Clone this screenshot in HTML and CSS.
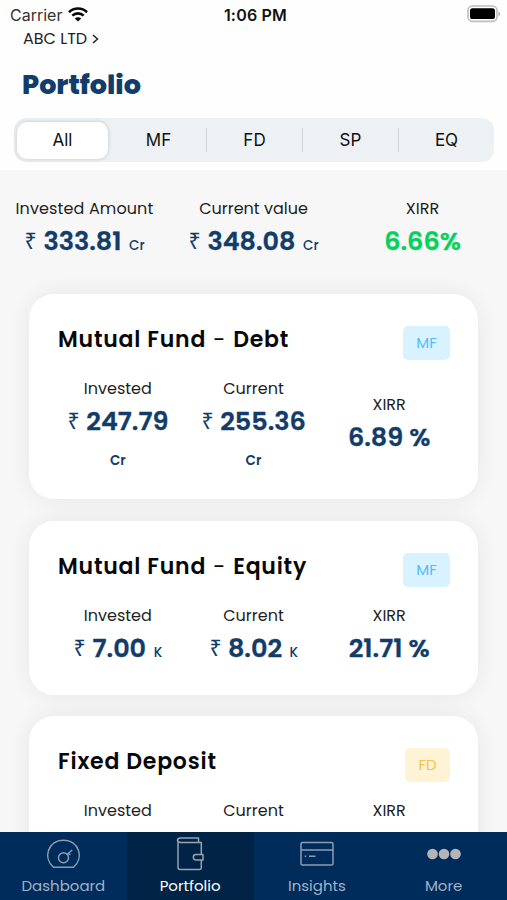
FILE: index.html
```html
<!DOCTYPE html>
<html lang="en">
<head>
<meta charset="utf-8">
<title>Portfolio</title>
<link rel="stylesheet" href="styles.css">
</head>
<body>
<div class="app">
  <header class="header">
    <div class="status">
      <div class="carrier">Carrier
        <svg width="20" height="15" viewBox="0 0 20 15" fill="none" stroke="#080808" stroke-width="2.6"><path d="M1 5.2C6 .3 14 .3 19 5.2M4.3 8.6c3.2-3 8.2-3 11.4 0"/><path d="M10 14.6l-3.2-3.2c1.8-1.6 4.6-1.6 6.4 0z" fill="#080808" stroke="none"/></svg>
      </div>
      <div class="clock">1:06 PM</div>
      <div class="battery"><svg width="34" height="18" viewBox="0 0 34 18"><rect x="1" y="1" width="29" height="15.4" rx="4.5" fill="#fff" stroke="#bdbdbd" stroke-width="1.6"/><rect x="3" y="3.3" width="25" height="10.8" rx="2.6" fill="#000"/><path d="M31.5 6.5c2 .8 2 4 0 4.8z" fill="#aaa"/></svg></div>
    </div>
    <div class="account">ABC LTD <svg width="7" height="10" viewBox="0 0 7 10" fill="none" stroke="#222" stroke-width="1.5"><path d="M1 1l4.5 4L1 9"/></svg></div>
    <h1 class="title">Portfolio</h1>
    <nav class="segments">
      <div class="segment selected">All</div>
      <div class="segment">MF</div>
      <div class="segment ruled">FD</div>
      <div class="segment ruled">SP</div>
      <div class="segment ruled">EQ</div>
    </nav>
  </header>
  <main class="content">
    <section class="summary">
      <div class="metric"><div class="label l-amount">Invested Amount</div><div class="value"><span class="rupee">₹</span> 333.81 <span class="unit">Cr</span></div></div>
      <div class="metric"><div class="label">Current value</div><div class="value"><span class="rupee">₹</span> 348.08 <span class="unit">Cr</span></div></div>
      <div class="metric"><div class="label">XIRR</div><div class="value gain">6.66%</div></div>
    </section>
    <section class="card">
      <div class="card-head"><h2>Mutual Fund <span class="dash">-</span> Debt</h2><span class="badge mf">MF</span></div>
      <div class="metrics">
        <div class="metric"><div class="label">Invested</div><div class="value"><span class="rupee">₹</span> 247.79</div><div class="unit below">Cr</div></div>
        <div class="metric"><div class="label">Current</div><div class="value"><span class="rupee">₹</span> 255.36</div><div class="unit below">Cr</div></div>
        <div class="metric"><div class="label">XIRR</div><div class="value">6.89 %</div></div>
      </div>
    </section>
    <section class="card">
      <div class="card-head"><h2>Mutual Fund <span class="dash">-</span> Equity</h2><span class="badge mf">MF</span></div>
      <div class="metrics">
        <div class="metric"><div class="label">Invested</div><div class="value"><span class="rupee">₹</span> 7.00 <span class="unit">K</span></div></div>
        <div class="metric"><div class="label">Current</div><div class="value"><span class="rupee">₹</span> 8.02 <span class="unit">K</span></div></div>
        <div class="metric"><div class="label">XIRR</div><div class="value">21.71 %</div></div>
      </div>
    </section>
    <section class="card">
      <div class="card-head"><h2>Fixed Deposit</h2><span class="badge fd">FD</span></div>
      <div class="metrics">
        <div class="metric"><div class="label">Invested</div></div>
        <div class="metric"><div class="label">Current</div></div>
        <div class="metric"><div class="label">XIRR</div></div>
      </div>
    </section>
  </main>
  <footer class="tabs">
    <div class="tab"><svg width="36" height="36" viewBox="0 0 36 36" fill="none" stroke="#8b9cb1" stroke-width="1.5"><path d="M8.500 31.300C-2.500 22 3 4.200 18.500 4.200S39.500 22 28.500 31.300Z" stroke-linejoin="round"/><circle cx="18.500" cy="21.800" r="5"/><path d="M22.200 18.300l5-4.300M23.500 18l2 .500"/></svg><span>Dashboard</span></div>
    <div class="tab active"><svg width="36" height="36" viewBox="0 0 36 36" fill="none" stroke="#98a3b0" stroke-width="1.500" stroke-linejoin="round"><path d="M29.300 18.500V6.500H8.500c-2 0-3-1-3-2.200s1-2.300 3-2.300h18v4M6 4.500V31.500a2 2 0 0 0 2 2h19.300a2 2 0 0 0 2-2v-7.500"/><path d="M31 18.500h-7a2.700 2.700 0 0 0 0 5.400h7z"/></svg><span>Portfolio</span></div>
    <div class="tab"><svg width="36" height="36" viewBox="0 0 36 36" fill="none" stroke="#8b9cb1" stroke-width="1.500"><rect x="2" y="6.500" width="32" height="22.500" rx="1.500"/><path d="M2 14h32M5.700 20.300h1.500M10 20.300h6.500"/></svg><span>Insights</span></div>
    <div class="tab"><svg width="36" height="36" viewBox="0 0 36 36" fill="#b4b4b7"><circle cx="6.500" cy="18" r="5.300"/><circle cx="18" cy="18" r="5.300"/><circle cx="29.500" cy="18" r="5.300"/></svg><span>More</span></div>
  </footer>
</div>
</body>
</html>
```
FILE: styles.css
```css
* { box-sizing: border-box; }
body { margin: 0; background: #fff; color: #111; font-family: Poppins, Inter, "Noto Sans", sans-serif; }
.app { width: 507px; height: 900px; overflow: hidden; display: flex; flex-direction: column; }
.header { height: 170px; flex: none; background: #fefefe; }
.status { height: 29px; padding: 0 6px 0 10px; display: grid; grid-template-columns: 1fr auto 1fr; align-items: center; font-family: Inter, sans-serif; font-size: 16px; }
.carrier { display: flex; align-items: center; gap: 6px; color: #333; }
.clock { font-weight: 600; letter-spacing: 0.2px; padding-right: 4px; margin-right: -4px; }
.battery { display: flex; justify-content: flex-end; margin-top: -2px; }
.account { height: 20px; line-height: 20px; padding-left: 23px; font-size: 16px; color: #222; }
.account svg { margin-left: 1px; }
.title { margin: 17px 0 0; padding-left: 22px; height: 38px; line-height: 38px; font-size: 27px; font-weight: 800; color: #123c69; }
.segments { margin: 14px 13px 0 14px; height: 44px; display: grid; grid-template-columns: repeat(5, 1fr); align-items: center; background: #edf1f4; border-radius: 12px; }
.segment { height: 24px; line-height: 24px; text-align: center; font-family: Inter, sans-serif; font-size: 17px; border-left: 1px solid transparent; }
.segment.ruled { border-left-color: #d0d5d9; }
.segment.selected { height: 37px; line-height: 37px; margin: 0 2px 0 3px; background: #fff; border: 0; border-radius: 10px; box-shadow: 0 0 4px rgba(0,0,0,.18); }
.content { flex: 1; min-height: 0; overflow: hidden; background: #f7f7f8; }
.summary { height: 124px; padding-top: 27px; display: grid; grid-template-columns: repeat(3, 1fr); }
.metric { text-align: center; white-space: nowrap; }
.label { height: 24px; line-height: 24px; font-size: 16px; color: #1e1e1e; }
.l-amount { letter-spacing: 0.12px; }
.value { height: 40px; line-height: 40px; font-size: 25.5px; font-weight: 600; color: #123c69; -webkit-text-stroke: 0.35px currentColor; }
.rupee { display: inline-block; width: 12px; font-family: "Noto Sans", sans-serif; font-weight: 400; font-size: 23px; line-height: 1; -webkit-text-stroke: 0; margin-right: 1px; transform: translateY(-1px) scaleX(.93); }
.unit { font-size: 13.5px; font-weight: 500; color: #123c69; -webkit-text-stroke: 0; }
.value .unit { margin-left: 1.5px; }
.unit.below { height: 32px; line-height: 39px; font-weight: 600; }
.gain { color: #08d05c; }
.card { width: 449px; margin: 0 0 21.5px 29px; padding: 28px 21px 0; height: 174px; border-radius: 25px; background: #fff; box-shadow: 0 0 24px rgba(0,0,0,.07); }
.summary + .card { height: 205px; }
.card-head { height: 42px; display: flex; justify-content: space-between; align-items: center; padding: 0 7px 0 8px; }
h2 { margin: 0; height: 40px; line-height: 34px; font-size: 22px; font-weight: 600; color: #080808; letter-spacing: 0.8px; }
.dash { display: inline-block; font-weight: 400; margin: 0 1px; }
.badge { height: 34px; line-height: 34px; width: 47px; text-align: center; border-radius: 5px; font-size: 15px; }
.mf { background: #d9f2ff; color: #54bdf8; }
.fd { width: 45px; background: #fff3d6; color: #f0c548; }
.metrics { display: grid; grid-template-columns: repeat(3, 1fr); align-items: center; padding-top: 13px; }
.tabs { height: 68px; flex: none; display: grid; grid-template-columns: repeat(4, 1fr); background: #002c5b; }
.tab { display: flex; flex-direction: column; align-items: center; padding-top: 4px; font-size: 15px; line-height: 28px; color: #9fb2c8; }
.tab.active { background: #002346; color: #fff; }
```
